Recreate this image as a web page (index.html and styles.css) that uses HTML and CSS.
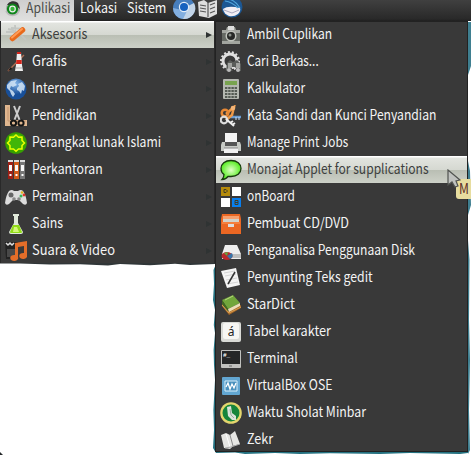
FILE: index.html
```html
<!DOCTYPE html>
<html lang="id">
<head>
<meta charset="utf-8">
<title>Aplikasi</title>
<link rel="stylesheet" href="styles.css">
</head>
<body>
<svg class="desk" viewBox="0 0 471 455" aria-hidden="true">
<path fill="#303638" d="M0 260H215V264L190 265 175 263.800 150 265.200 120 264 108 265.500 80 264.200 50 264.600 20 263.600 0 263.400z"/>
<path fill="#247180" d="M216 264L213.500 270 214 284 213 300 215 310 213.800 325 215 333 213.600 350 214 365 215 380 213.400 410 214 430 213 448 216 453 235 452.500 245 454 275 453 300 454 330 453.200 380 454 410 453 460 454 468 453V440z"/>
<path fill="#3f7f90" d="M468 22h3v44l-3 9zM468 161l2 10 1 34-3 10zM468 240l1.500 20-.5 60 1 40-1 50 1 40-2 4z"/>
<path fill="#25282a" d="M0 452l3 3H0z"/>
</svg>
<nav class="panel">
<div class="tab active"><svg class="logo" viewBox="0 0 18 18"><defs><radialGradient id="gm"><stop offset="0" stop-color="#9df58c"/><stop offset="1" stop-color="#129b18"/></radialGradient></defs><circle cx="9" cy="8.500" r="7" fill="#aaa"/><path d="M3 5a7 7 0 0 1 11-2l2 6-5-4z" fill="#333"/><circle cx="8.500" cy="9" r="5.600" fill="#0c8519"/><circle cx="8.500" cy="9" r="3.400" fill="#eee"/><circle cx="8.500" cy="9" r="2.200" fill="#38b53b"/><path d="M2 11a7 7 0 0 0 13 0" fill="none" stroke="#bbb" stroke-width="1.500"/></svg><span style="--s:.87">Aplikasi</span></div>
<div class="tab"><span style="--s:.89">Lokasi</span></div>
<div class="tab sys"><span style="--s:.89">Sistem</span></div>
<svg class="launch" viewBox="0 0 72 21">
<circle cx="12" cy="8" r="11" fill="#477ebd"/><path d="M12 8L22 3A11 11 0 0 1 11 19z" fill="#c3d5e8"/><path d="M1 8A11 11 0 0 0 11 19L15 11z" fill="#83afe0"/><circle cx="12" cy="7" r="5.200" fill="#e3edf8"/><circle cx="12" cy="7" r="4" fill="#1762bf"/>
<path d="M26 2l6-2 4 3 9-3v14l-8 4-10-2z" fill="#dedede"/><path d="M36 2v15M28 5l6 1M28 8l6 1M28 11l6 1M38 5l5-2M38 9l5-2M38 13l5-2" stroke="#555" stroke-width="1.200"/>
<circle cx="60" cy="7" r="10.500" fill="#1c5793"/><path d="M51 9Q56 5 68 8q1 3-2 6-4 3-9 2-5-2-6-7z" fill="#f2eff5"/><path d="M52 10l8 3 7-3" stroke="#aaa8bf" fill="none"/><path d="M53 1q7 1 13 7M57-1q7 2 11 9" stroke="#50a4db" stroke-width="1.200" fill="none"/>
</svg>
</nav>
<main>
<ul class="menu first">
<li class="hot"><svg viewBox="0 0 22 22"><path d="M3 5l5 1 6 13M10 1l1 17M4 18l11-8 6 6M1 8h8M6 4l13 1" stroke="#c3c6c2" stroke-width="1.800" fill="none"/><path d="M7.500 14.500L17.500 6" stroke="#e86a1b" stroke-width="5.500" stroke-linecap="round"/><path d="M7 13.500L17 5" stroke="#ff9b56" stroke-width="2" stroke-linecap="round"/></svg><span style="--s:.9">Aksesoris</span><i></i></li>
<li><svg viewBox="0 0 22 22"><path d="M3 20L19 4" stroke="#b06e53" stroke-width="1.500"/><path d="M3 20l3-4 1 2z" fill="#111"/><path d="M12 1h4l1 13 1 6h-8l1-6z" fill="#eee"/><path d="M12 1h4v2h-4zM11.300 9h5.400v4h-5.600z" fill="#d5251c"/><path d="M11 17h6" stroke="#aaa"/></svg><span style="--s:.93">Grafis</span><i></i></li>
<li><svg viewBox="0 0 22 22"><defs><radialGradient id="globe" cy=".25"><stop stop-color="#82b4e9"/><stop offset="1" stop-color="#184f99"/></radialGradient></defs><circle cx="11" cy="11" r="10.500" fill="url(#globe)"/><path d="M2 7l4-4 6-1-2 3 2 2-4 2-2-1-1 3 3 2 2 3-2 3-2-3-1-3-3-3zM12 10l2-2-1-2 4-2 3 4-1 5-2-1-1 4-2-3-2-1z" fill="#d3e5f6" opacity=".85"/></svg><span style="--s:.87">Internet</span><i></i></li>
<li><svg viewBox="0 0 22 22"><path d="M0 0h5v15h17v6H0z" fill="#dfb68f"/><path d="M3 2v14h18" stroke="#c39670" fill="none"/><path d="M9 1l6 15M15 1L9 16" stroke="#ccc" stroke-width="2"/><circle cx="8.500" cy="18" r="2.600" fill="none" stroke="#151515" stroke-width="2"/><circle cx="16" cy="18" r="2.600" fill="none" stroke="#151515" stroke-width="2"/></svg><span style="--s:.877">Pendidikan</span><i></i></li>
<li><svg viewBox="0 0 22 22"><circle cx="11" cy="11" r="10.800" fill="#36a000"/><circle cx="11" cy="10" r="8" fill="#51bd05"/><path d="M11 3l2.500 2.200 3.500-.2v3.500l2.500 2.500-2.500 2.500V17h-3.500L11 19.200 8.500 17H5v-3.500L2.500 11 5 8.500V5l3.500.2z" fill="#41b608" stroke="#eaff00" stroke-width="1.500"/></svg><span style="--s:.87">Perangkat lunak Islami</span><i></i></li>
<li><svg viewBox="0 0 22 22"><path d="M3 2h5v18H3z" fill="#9e1f14"/><path d="M9 2h5v18H9z" fill="#d25a19"/><path d="M15 2h5v18h-5z" fill="#777"/><path d="M3 2h5M9 2h5M15 2h5" stroke="#ddd" stroke-width="2"/><path d="M4 6h3v6H4zM10 6h3v6h-3zM16 6h3v6h-3z" fill="#f8f8f8"/><path d="M4.500 16h2M10.500 16h2M16.500 16h2" stroke="#fff" stroke-width="2"/></svg><span style="--s:.877">Perkantoran</span><i></i></li>
<li><svg viewBox="0 0 22 22"><path d="M4 5q3-2 5 0h4q3-2 5 0 3 4 4 12-1 3-4 1l-4-4H8l-4 4q-3 2-4-1Q1 9 4 5z" fill="#dcdcdc"/><circle cx="6" cy="9" r="2.500" fill="#666"/><circle cx="9" cy="13" r="1.800" fill="#888"/><circle cx="14" cy="13" r="1.800" fill="#888"/><circle cx="17" cy="6.500" r="1.300" fill="#dfb51c"/><circle cx="19" cy="9" r="1.400" fill="#d93429"/><circle cx="16" cy="10" r="1.500" fill="#35b556"/></svg><span style="--s:.865">Permainan</span><i></i></li>
<li><svg viewBox="0 0 22 22"><path d="M8 1h6v2h-1v7l5 9q0 2-2 2H6q-2 0-2-2l5-9V3H8z" fill="#e0e9da"/><path d="M8 12h6l3 7q0 1-1 1H6q-1 0-1-1z" fill="#91dc17"/><path d="M9 14h3l2 5H8z" fill="#d3f878"/></svg><span style="--s:.886">Sains</span><i></i></li>
<li><svg viewBox="0 0 22 22"><path d="M0 2h13v17H1z" fill="#222"/><path d="M1 3l2 2 2-2 2 2 2-2" stroke="#ddd" stroke-width="1.500" fill="none"/><path d="M2 9h9v8H2z" fill="#484848"/><path d="M10 3l12-2v14a4 3 0 1 1-3-2V6l-6 1v10a4 3 0 1 1-3-2z" fill="#e36d29"/></svg><span style="--s:.92">Suara &amp; Video</span><i></i></li>
</ul>
<ul class="menu second">
<li><svg viewBox="0 0 22 22"><path d="M2 6h4l1-3h8l1 3h4v14H2z" fill="#a2a59f"/><path d="M8 2h6v4H8z" fill="#ddd"/><path d="M2 9h18v8H2z" fill="#656963"/><circle cx="11" cy="12" r="5.500" fill="#c1c4bd"/><circle cx="11" cy="12" r="4" fill="#272927"/><circle cx="10" cy="11" r="1.500" fill="#8c928b"/></svg><span style="--s:.86">Ambil Cuplikan</span></li>
<li><svg viewBox="0 0 22 22"><circle cx="10" cy="10" r="7" fill="none" stroke="#dedede" stroke-width="3"/><circle cx="10" cy="10" r="9" fill="none" stroke="#dedede" stroke-width="2" stroke-dasharray="2 2"/><path d="M7 12l3-3 3 2 4-2 4 4v7h-5v-4h-4v4H6z" fill="#5a5d5a"/><path d="M8 12h4v5H8zM16 12h4v5h-4z" fill="#a2a4a1"/><circle cx="9" cy="19" r="2" fill="#bbb"/><circle cx="18" cy="19" r="2" fill="#bbb"/></svg><span style="--s:.84">Cari Berkas...</span></li>
<li><svg viewBox="0 0 22 22"><rect x="3" y="1" width="16" height="20" rx="1" fill="#b4b7b0"/><path d="M5 3h12v4H5z" fill="#78a34f"/><path d="M5 10h12M5 13h12M5 16h12M5 19h12" stroke="#555b54" stroke-width="2" stroke-dasharray="2.400 .8"/></svg><span style="--s:.86">Kalkulator</span></li>
<li><svg viewBox="0 0 22 22"><path d="M9 12h12" stroke="#6a9cd1" stroke-width="2.500"/><path d="M16 12v3M19 12v3" stroke="#c9dff5"/><path d="M6 9L14 2l-2 8-6 5" stroke="#ef9a48" stroke-width="2.500" fill="none"/><circle cx="5" cy="8" r="3.300" fill="none" stroke="#e78835" stroke-width="2.500"/><circle cx="13" cy="3" r="2.300" fill="#f4b477"/><circle cx="4" cy="15" r="3.300" fill="none" stroke="#ddd" stroke-width="2.200"/><path d="M6 14l8 7M10 18l3-2M12 20l3-2" stroke="#eee" stroke-width="2"/></svg><span style="--s:.867">Kata Sandi dan Kunci Penyandian</span></li>
<li><svg viewBox="0 0 22 22"><path d="M5 1h12v9H5z" fill="#f3f3f3"/><path d="M2 10h18l1 3v6H1v-6z" fill="#c7cac5"/><path d="M5 10h12v4H5z" fill="#555"/><path d="M4 16h14v5H4z" fill="#f0f0f0"/><path d="M4 16h14" stroke="#888"/></svg><span style="--s:.84">Manage Print Jobs</span></li>
<li class="hot"><svg viewBox="0 0 22 22"><defs><radialGradient id="say"><stop stop-color="#e1ffc7"/><stop offset="1" stop-color="#55ed20"/></radialGradient></defs><path d="M11 1.500c6 0 10 3.500 10 8s-4 8-10 8l-3-.2q-2 3-6 3.200 2-2 2-5C2 14 1 12 1 9.500c0-4.500 4-8 10-8z" fill="url(#say)" stroke="#173a0d" stroke-width="1.300"/></svg><span style="--s:.86">Monajat Applet for supplications</span></li>
<li><svg viewBox="0 0 22 22"><path d="M1 1h9v9H1z" fill="#b58b0b"/><path d="M12 1h9v9h-9zM1 12h9v9H1z" fill="#fff"/><path d="M12 12h9v9h-9z" fill="#087eee"/><path d="M4 3.500h2q3 1.500 0 3H4zM15 14.500h3v2h-3zM15 16.500h3v2h-3z" fill="none" stroke="#403c24"/></svg><span style="--s:.85">onBoard</span></li>
<li><svg viewBox="0 0 22 22"><path d="M2 1h18l1 5v15H1V6z" fill="#eb6723"/><path d="M3 3h16v3H3z" fill="#f7a16f"/><path d="M3 6h16v3H3z" fill="#d2d2ca"/><path d="M2 10h18" stroke="#ff9b5d"/><path d="M8 11h6v3H8z" fill="#ddd"/></svg><span style="--s:.9">Pembuat CD/DVD</span></li>
<li><svg viewBox="0 0 22 22"><path d="M5 5h12l4 9v5H2v-5z" fill="#eee"/><path d="M2 14h19v4H2z" fill="#bdbdbd"/><ellipse cx="7" cy="16" rx="5.500" ry="4" fill="#b9292d"/><path d="M7 16l5-3q2 4-2 6z" fill="#3575aa"/><path d="M7 16l-3-3 4-1z" fill="#63a63d"/></svg><span style="--s:.862">Penganalisa Penggunaan Disk</span></li>
<li><svg viewBox="0 0 22 22"><path d="M1 4l15-3 4 17-13 3z" fill="#f4f4f4"/><path d="M4 6l11-2M5 9l11-2M6 13l11-2M7 17l11-2" stroke="#d4d4d4"/><path d="M15 5L8 17" stroke="#333" stroke-width="1.500"/></svg><span style="--s:.875">Penyunting Teks gedit</span></li>
<li><svg viewBox="0 0 22 22"><path d="M2 9l6 8 13-6v3L9 21 2 12z" fill="#a46726"/><path d="M2 6L13 1l7 8-12 6z" fill="#71a63b"/><path d="M2 6l6 9v3L2 10z" fill="#426b22"/><path d="M8 15l12-6v3L9 18z" fill="#ecdeb7"/><path d="M5 6l8-4" stroke="#b7d67f"/><path d="M2 11l7 8 12-6" stroke="#dda054" fill="none"/></svg><span style="--s:.92">StarDict</span></li>
<li><svg viewBox="0 0 22 22"><rect x="1" y="1" width="20" height="20" rx="2" fill="#d9dad6"/><rect x="3" y="2" width="16" height="16" rx="2" fill="#f6f6f3"/><text x="11" y="15" text-anchor="middle" class="glyph">á</text></svg><span style="--s:.905">Tabel karakter</span></li>
<li><svg viewBox="0 0 22 22"><rect x="1" y="2" width="20" height="18" rx="1" fill="#c0c1be"/><path d="M2 3h18v13H2z" fill="#252727"/><text x="3" y="9" class="prompt">#_</text><path d="M9 18h3" stroke="#666"/></svg><span style="--s:.877">Terminal</span></li>
<li><svg viewBox="0 0 22 22"><rect x="2" y="2" width="18" height="18" rx="1" fill="#62a6d1"/><path d="M5 6h12v10H5z" fill="#4990bd" stroke="#d9effb"/><path d="M6 12l2-4 2 6 2-5 2 4 2-5" fill="none" stroke="#fff" stroke-width="1.300"/></svg><span style="--s:.877">VirtualBox OSE</span></li>
<li><svg viewBox="0 0 22 22"><circle cx="11" cy="11" r="10.800" fill="#e4d66d"/><circle cx="11" cy="11" r="8.500" fill="#16853a"/><path d="M7 5l4-1 1 7 4 3v4l-4 0-4-4z" fill="#d9e3da"/><path d="M10 7l1 6 3 3" stroke="#9cad9e" fill="none"/></svg><span style="--s:.88">Waktu Sholat Minbar</span></li>
<li><svg viewBox="0 0 22 22"><path d="M1 6l5-2 4 2 5-4 5 13-7 2-3 3-6-1z" fill="#e6e6e3"/><path d="M10 6l3 11" stroke="#888"/><path d="M6 5l4 13" stroke="#fff"/><path d="M5 19l6-1 9-3" stroke="#aaa" fill="none"/></svg><span style="--s:.9">Zekr</span></li>
</ul>
</main>
<div class="tip"><span style="--s:.87">M</span></div>
<svg class="cursor" viewBox="0 0 14 20"><path d="M1 1v15l4-3 3 5 3-1-2-5 4-1z" fill="#bfc2bf" stroke="#505350" stroke-width="1.200"/></svg>
</body>
</html>
```
FILE: styles.css
```css
* { box-sizing: border-box; }
body {
  margin: 0;
  width: 471px;
  height: 455px;
  overflow: hidden;
  background: #fff;
  color: #f4f4f4;
  font: 14px/20px "Noto Sans CJK SC", "Noto Sans", sans-serif;
  position: relative;
}
.desk { position: absolute; inset: 0; width: 471px; height: 455px; z-index: -1; }
.panel {
  display: flex;
  height: 21px;
  background: linear-gradient(#404040, #292929 90%, #202020);
}
.tab { flex: none; height: 21px; line-height: 15px; padding-left: 6px; white-space: nowrap; }
.tab span, .menu li span, .tip span {
  display: inline-block;
  transform: scaleX(var(--s));
  transform-origin: left;
}
.tab.active {
  display: flex;
  width: 74px;
  padding-left: 4px;
  color: #4b4d4a;
  background: linear-gradient(#cecece, #e0e0df);
}
.tab.active span { margin-left: 4px; width: 44px; }
.logo { width: 18px; height: 18px; flex: none; }
.tab:nth-child(2) { width: 47px; }
.tab.sys { width: 51px; }
.launch { width: 72px; height: 21px; flex: none; overflow: hidden; }
main { display: flex; align-items: flex-start; }
.menu { margin: 0; padding: 0; list-style: none; background: #393939; overflow: hidden; }
.first { width: 215px; height: 242px; border-left: 1px solid #292929; border-right: 1px solid #292929; }
.second { width: 253px; height: 431px; border: 1px solid #222; }
.menu li { display: flex; align-items: center; height: 27px; padding-left: 4px; white-space: nowrap; }
.second li:first-child { height: 26px; }
.menu li > svg { width: 22px; height: 22px; flex: none; }
.menu li span { margin: -4px 0 0 5px; }
.menu li i {
  margin-left: auto;
  margin-right: 2px;
  border: 3px solid transparent;
  border-left: 6px solid #2f3333;
  border-right: 0;
}
.menu .hot {
  color: #3d403e;
  background: linear-gradient(#fff 0 1px, #e2e4df 2px, #d5d8d1 14px, #b9beb3 14px, #cdd1c8);
}
.glyph { font: 12px "Noto Sans"; fill: #222; }
.prompt { font: bold 6px "Liberation Mono"; fill: #fff; }
.tip {
  position: absolute;
  left: 456px;
  top: 179px;
  width: 20px;
  height: 20px;
  padding-left: 3px;
  line-height: 18px;
  border-radius: 3px;
  background: #e7dda0;
  color: #5a2b24;
}
.cursor { position: absolute; left: 447px; top: 169px; width: 14px; height: 20px; }
```
